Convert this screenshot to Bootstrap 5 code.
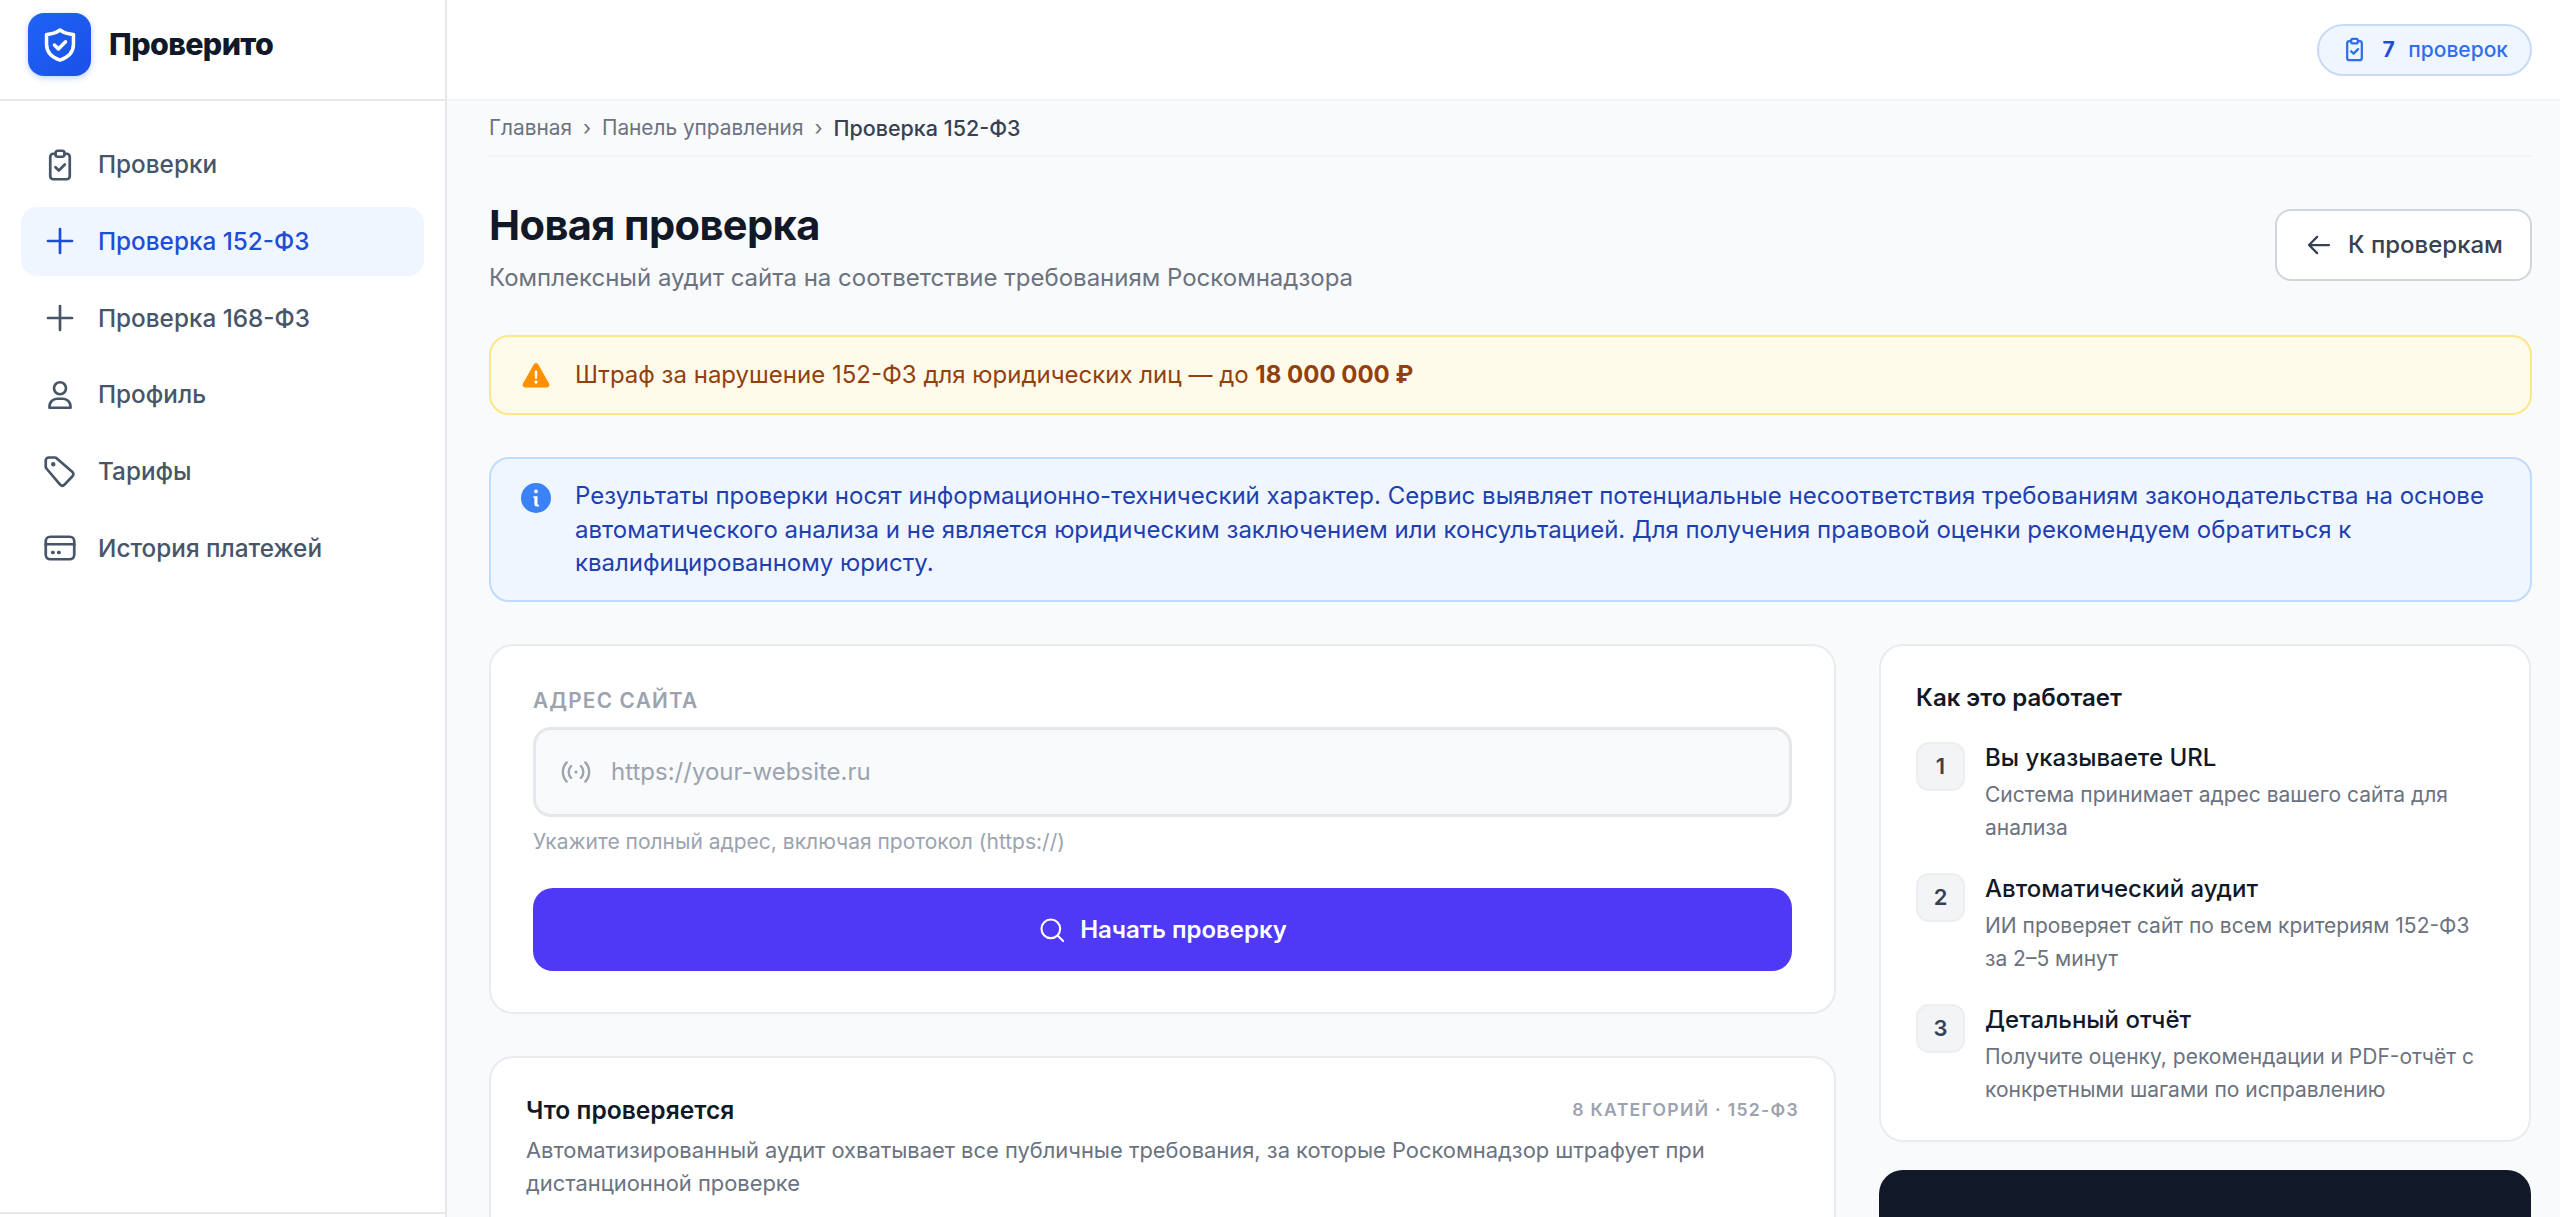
<!DOCTYPE html>
<html lang="ru">
<head>
<meta charset="utf-8">
<title>Проверито</title>
<link href="https://cdn.jsdelivr.net/npm/bootstrap@5.3.0/dist/css/bootstrap.min.css" rel="stylesheet">
<style>
html,body{height:100%;overflow:hidden}
body{font-family:Inter,"Noto Sans",sans-serif;background:#f9fafb;color:#111827}
.app-shell{height:1217px}
.side{width:447px;flex:none;background:#fff;border-right:2px solid #e5e7eb}
.side-head{height:101px;padding:13px 0 0 28px;border-bottom:2px solid #e5e7eb;gap:18px;flex:none}
.logo-box{width:63px;height:63px;border-radius:16px;background:linear-gradient(135deg,#1f63f6,#1a50e8);box-shadow:0 2px 6px rgba(37,99,235,.3)}
.logo-name{font-size:30.4px;font-weight:800;letter-spacing:-.6px;color:#111827;line-height:1;margin-top:16px}
.side-nav{padding:29px 21px 0 21px;gap:7.7px}
.side-link{height:69px;border-radius:16px;padding-left:21px;gap:20px;font-size:24.3px;font-weight:500;color:#475569;text-decoration:none}
.side-link.on{background:#eff6ff;color:#1d4ed8}
.side-link svg{width:36px;height:36px;flex:none}
.side-foot{height:5px;border-top:2px solid #e5e7eb;flex:none}
.main-col{min-width:0}
.topbar{height:101px;flex:none;background:#fff;border-bottom:2px solid #f1f3f6;padding-right:28px}
.count-pill{height:52px;padding:0 22px;border-radius:26px;background:#eff6ff;border:2px solid #c7dbf7;gap:14px;font-size:21px;font-weight:500;color:#2f6fed}
.count-pill b{color:#1d4ed8;font-weight:700;font-size:21px}
.page-body{padding:0 28px 0 42px}
.crumbs{height:56px;border-bottom:2px solid #f1f3f6;font-size:20.8px;color:#6b7280;gap:11px}
.crumbs .now{color:#374151;font-weight:500;font-size:21.5px}
.title-row{padding-top:43px;height:178px}
.page-title{font-size:41.6px;font-weight:700;letter-spacing:-.6px;line-height:50px;margin:0 0 11px;color:#111827}
.page-sub{font-size:24px;color:#6b7280;line-height:34px;margin:0}
.back-btn{width:257px;height:72px;border:2px solid #d1d5db;border-radius:16px;background:#fff;font-size:24px;font-weight:500;color:#374151;gap:14px;margin-top:9px}
.note{border-radius:20px;border:2px solid;padding:0 30px;gap:24px;font-size:24px;line-height:33.5px}
.note-warn{height:80px;background:#fffbeb;border-color:#fde68a;color:#92400e;margin-bottom:42px}
.note-warn b{font-weight:700}
.note-info{height:145px;background:#eff6ff;border-color:#bfdbfe;color:#1e40af;padding-top:20px;margin-bottom:42px}
.note svg{width:30px;height:30px;flex:none}
.work-grid{display:grid;grid-template-columns:1347px 652px;gap:43px}
.panel{background:#fff;border:2px solid #e9ebef;border-radius:24px}
.url-panel{height:370px;padding:40px 42px 0 42px;margin-bottom:42px}
.url-label{font-size:20.8px;font-weight:600;letter-spacing:1.2px;color:#9ca3af;line-height:30px;margin-bottom:11px}
.url-field{height:90px;background:#f9fafb;border:3px solid #e5e7eb;border-radius:18px;padding-left:24px;gap:19px}
.url-field svg{width:32px;height:32px;flex:none}
.url-input{border:0;background:transparent;outline:0;flex:1;font-size:24px;color:#111827;padding:0}
.url-input::placeholder{color:#9ca3af;opacity:1}
.url-hint{font-size:21px;color:#9ca3af;line-height:30px;margin:10px 0 31px}
.go-btn{height:83px;width:100%;border-radius:20px;background:#4f39f6;border:0;color:#fff;font-size:24px;font-weight:600;gap:14px}
.go-btn svg{width:28px;height:28px}
.scope-panel{height:800px;padding:35px 35px 0 35px}
.block-title{font-size:24.6px;font-weight:600;color:#111827;line-height:34px}
.how-panel .block-title{font-size:24px}
.scope-tag{font-size:17.6px;font-weight:600;letter-spacing:1.3px;color:#9ca3af}
.scope-text{font-size:21.9px;line-height:33px;color:#6b7280;margin:7px 0 0}
.how-panel{height:498px;padding:35px 36px 0 35px;margin-bottom:28px}
.how-step{gap:20px;margin-top:0;height:131px}
.how-list{margin-top:26px}
.how-num{width:49px;height:49px;flex:none;border-radius:13px;background:#f3f4f6;border:2px solid #eceef1;font-size:22px;font-weight:600;color:#374151;margin-top:1px}
.how-name{font-size:24px;font-weight:500;color:#111827;line-height:34px;margin-top:0}
.how-desc{font-size:21px;line-height:33px;color:#6b7280;margin-top:3px}
.promo{height:400px;background:#111827;border-radius:24px}
</style>
</head>
<body>
<div class="app-shell d-flex">
  <aside class="side d-flex flex-column">
    <div class="side-head d-flex align-items-start">
      <div class="logo-box d-flex align-items-center justify-content-center">
        <svg width="38" height="38" viewBox="0 0 24 24" fill="none" stroke="#fff" stroke-width="2.200" stroke-linecap="round" stroke-linejoin="round"><path d="M12 2.500c2.400 1.700 5 2.600 8.500 2.800v6.200c0 5-3.400 8.300-8.500 10-5.100-1.700-8.500-5-8.500-10V5.300C7 5.100 9.600 4.200 12 2.500z"/><path d="m8.500 12 2.500 2.500 4.500-4.500"/></svg>
      </div>
      <div class="logo-name">Проверито</div>
    </div>
    <nav class="side-nav d-flex flex-column flex-grow-1">
      <a class="side-link d-flex align-items-center" href="#"><svg viewBox="0 0 24 24" fill="none" stroke="currentColor" stroke-width="1.800" stroke-linecap="round" stroke-linejoin="round"><path d="M9 4.500H7.500A2 2 0 0 0 5.500 6.500v13a2 2 0 0 0 2 2h9a2 2 0 0 0 2-2v-13a2 2 0 0 0-2-2H15"/><rect x="9" y="2.500" width="6" height="4" rx="1.500"/><path d="m9 13.500 2.200 2.200 4-4"/></svg>Проверки</a>
      <a class="side-link on d-flex align-items-center" href="#"><svg viewBox="0 0 24 24" fill="none" stroke="currentColor" stroke-width="1.800" stroke-linecap="round"><path d="M12 4v16M4 12h16"/></svg>Проверка 152-ФЗ</a>
      <a class="side-link d-flex align-items-center" href="#"><svg viewBox="0 0 24 24" fill="none" stroke="currentColor" stroke-width="1.800" stroke-linecap="round"><path d="M12 4v16M4 12h16"/></svg>Проверка 168-ФЗ</a>
      <a class="side-link d-flex align-items-center" href="#"><svg viewBox="0 0 24 24" fill="none" stroke="currentColor" stroke-width="1.800" stroke-linecap="round" stroke-linejoin="round"><circle cx="12" cy="7.500" r="4"/><path d="M5 20.500v-1a5 5 0 0 1 5-5h4a5 5 0 0 1 5 5v1z"/></svg>Профиль</a>
      <a class="side-link d-flex align-items-center" href="#"><svg viewBox="0 0 24 24" fill="none" stroke="currentColor" stroke-width="1.800" stroke-linecap="round" stroke-linejoin="round"><path d="M2.500 9V5a2 2 0 0 1 2-2h4a2 2 0 0 1 1.400.6l10.400 9a2 2 0 0 1 0 2.900l-5.300 5.600a2 2 0 0 1-2.800.1L3.100 10.500A2 2 0 0 1 2.500 9z"/><circle cx="7.500" cy="7.500" r=".6" fill="currentColor"/></svg>Тарифы</a>
      <a class="side-link d-flex align-items-center" href="#"><svg viewBox="0 0 24 24" fill="none" stroke="currentColor" stroke-width="1.800" stroke-linecap="round" stroke-linejoin="round"><rect x="2.500" y="4.500" width="19" height="15" rx="3"/><path d="M2.500 9.500h19"/><path d="M7 15h.5M11 15h.5" stroke-width="2.200"/></svg>История платежей</a>
    </nav>
    <div class="side-foot"></div>
  </aside>
  <div class="main-col flex-grow-1 d-flex flex-column">
    <header class="topbar d-flex align-items-center justify-content-end">
      <div class="count-pill d-flex align-items-center">
        <svg width="27" height="27" viewBox="0 0 24 24" fill="none" stroke="#2f6fed" stroke-width="2" stroke-linecap="round" stroke-linejoin="round"><path d="M9 4.500H7.500A2 2 0 0 0 5.500 6.500v13a2 2 0 0 0 2 2h9a2 2 0 0 0 2-2v-13a2 2 0 0 0-2-2H15"/><rect x="9" y="2.500" width="6" height="4" rx="1.500"/><path d="m9 13.500 2.200 2.200 4-4"/></svg>
        <span class="d-flex gap-2"><b>7</b>&nbsp;проверок</span>
      </div>
    </header>
    <div class="page-body">
      <div class="crumbs d-flex align-items-center"><span>Главная</span><span>›</span><span>Панель управления</span><span>›</span><span class="now">Проверка 152-ФЗ</span></div>
      <div class="title-row d-flex justify-content-between align-items-start">
        <div>
          <h1 class="page-title">Новая проверка</h1>
          <p class="page-sub">Комплексный аудит сайта на соответствие требованиям Роскомнадзора</p>
        </div>
        <button class="back-btn d-flex align-items-center justify-content-center" type="button"><svg width="30" height="30" viewBox="0 0 24 24" fill="none" stroke="currentColor" stroke-width="1.800" stroke-linecap="round" stroke-linejoin="round"><path d="M20 12H4M10.500 5.500 4 12l6.500 6.500"/></svg>К проверкам</button>
      </div>
      <div class="note note-warn d-flex align-items-center">
        <svg viewBox="0 0 24 24"><path fill="#ff9100" d="M12 2.500c.8 0 1.500.4 1.900 1.100l8.500 15.200c.8 1.400-.2 3.200-1.900 3.200H3.500c-1.700 0-2.700-1.800-1.900-3.200L10.100 3.600c.4-.7 1.100-1.100 1.900-1.100z"/><path fill="#fff" d="M10.900 8.500h2.200l-.3 6.500h-1.600zM12 16.300a1.300 1.300 0 1 1 0 2.600 1.300 1.300 0 0 1 0-2.600z"/></svg>
        <div>Штраф за нарушение 152-ФЗ для юридических лиц — до <b>18 000 000 ₽</b></div>
      </div>
      <div class="note note-info d-flex align-items-start">
        <svg class="mt-1" viewBox="0 0 24 24"><circle cx="12" cy="12" r="12" fill="#3b82f6"/><path fill="#fff" d="M12 5.200a1.500 1.500 0 1 1 0 3 1.500 1.500 0 0 1 0-3zM9.800 10.500h3.400v6c0 .6.400.9 1.200.8v1.400c-2.200.5-3.700-.2-3.700-2v-4.900h-.9z"/></svg>
        <div>Результаты проверки носят информационно-технический характер. Сервис выявляет потенциальные несоответствия требованиям законодательства на основе автоматического анализа и не является юридическим заключением или консультацией. Для получения правовой оценки рекомендуем обратиться к квалифицированному юристу.</div>
      </div>
      <div class="work-grid">
        <div>
          <div class="panel url-panel">
            <div class="url-label">АДРЕС САЙТА</div>
            <div class="url-field d-flex align-items-center">
              <svg viewBox="0 0 24 24" fill="none" stroke="#9ca3af" stroke-width="1.800" stroke-linecap="round"><circle cx="12" cy="12" r="1.200" fill="#9ca3af" stroke="none"/><path d="M8.300 7.500a6.500 6.500 0 0 0 0 9M15.700 7.500a6.500 6.500 0 0 1 0 9M5 4.800a10.500 10.500 0 0 0 0 14.400M19 4.800a10.500 10.500 0 0 1 0 14.400"/></svg>
              <input class="url-input" type="text" placeholder="https://your-website.ru">
            </div>
            <div class="url-hint">Укажите полный адрес, включая протокол (https://)</div>
            <button class="go-btn d-flex align-items-center justify-content-center" type="button"><svg viewBox="0 0 24 24" fill="none" stroke="#fff" stroke-width="1.800" stroke-linecap="round"><circle cx="11" cy="11" r="8"/><path d="m17 17 4.500 4.500"/></svg>Начать проверку</button>
          </div>
          <div class="panel scope-panel">
            <div class="d-flex justify-content-between align-items-center">
              <div class="block-title">Что проверяется</div>
              <div class="scope-tag">8 КАТЕГОРИЙ · 152-ФЗ</div>
            </div>
            <p class="scope-text">Автоматизированный аудит охватывает все публичные требования, за которые Роскомнадзор штрафует при дистанционной проверке</p>
          </div>
        </div>
        <div>
          <div class="panel how-panel">
            <div class="block-title">Как это работает</div>
            <div class="how-list">
              <div class="how-step d-flex"><div class="how-num d-flex align-items-center justify-content-center">1</div><div><div class="how-name">Вы указываете URL</div><div class="how-desc">Система принимает адрес вашего сайта для анализа</div></div></div>
              <div class="how-step d-flex"><div class="how-num d-flex align-items-center justify-content-center">2</div><div><div class="how-name">Автоматический аудит</div><div class="how-desc">ИИ проверяет сайт по всем критериям 152-ФЗ за 2–5 минут</div></div></div>
              <div class="how-step d-flex"><div class="how-num d-flex align-items-center justify-content-center">3</div><div><div class="how-name">Детальный отчёт</div><div class="how-desc">Получите оценку, рекомендации и PDF-отчёт с конкретными шагами по исправлению</div></div></div>
            </div>
          </div>
          <div class="promo"></div>
        </div>
      </div>
    </div>
  </div>
</div>
<script src="https://cdn.jsdelivr.net/npm/bootstrap@5.3.0/dist/js/bootstrap.bundle.min.js"></script>
</body>
</html>
